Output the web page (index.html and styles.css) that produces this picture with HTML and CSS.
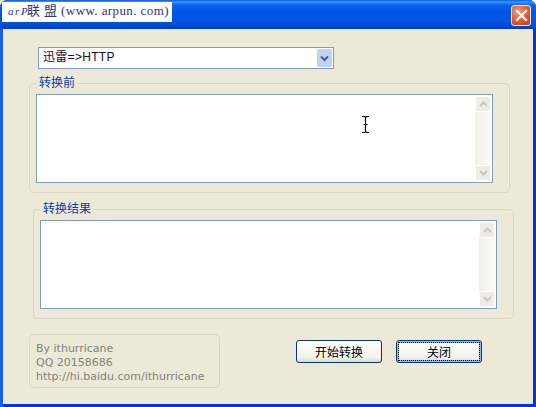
FILE: index.html
```html
<!DOCTYPE html>
<html>
    <head>
        <meta charset="utf-8" />
        <title>arP联盟</title>
        <link rel="stylesheet" href="styles.css">
    </head>
    <body>
        <div class="window">
            <div class="titlebar">
                <div class="logo"><i>a r P</i>联 盟 (www. arpun. com)</div>
                <div class="close-btn">
                    <svg width="13" height="13" viewBox="0 0 13 13"><path d="M2 2 L11 11 M11 2 L2 11" stroke="#fff" stroke-width="2.2" stroke-linecap="square" fill="none"/></svg>
                </div>
            </div>
            <div class="client">
                <div class="combo">
                    <span class="combo-text">迅雷=&gt;HTTP</span>
                    <span class="combo-arrow">
                        <svg width="9" height="7" viewBox="0 0 9 7"><path d="M1 1.5 L4.5 5 L8 1.5" stroke="#4d6185" stroke-width="2" fill="none"/></svg>
                    </span>
                </div>
                <fieldset class="group group-before">
                    <legend>转换前</legend>
                    <div class="textbox">
                        <div class="scrollbar">
                            <span class="sb-btn"><svg width="9" height="6" viewBox="0 0 9 6"><path d="M1 5 L4.5 1.5 L8 5" stroke="#c9c7ba" stroke-width="2" fill="none"/></svg></span>
                            <span class="sb-btn"><svg width="9" height="6" viewBox="0 0 9 6"><path d="M1 1 L4.5 4.5 L8 1" stroke="#c9c7ba" stroke-width="2" fill="none"/></svg></span>
                        </div>
                    </div>
                </fieldset>
                <fieldset class="group group-after">
                    <legend>转换结果</legend>
                    <div class="textbox">
                        <div class="scrollbar">
                            <span class="sb-btn"><svg width="9" height="6" viewBox="0 0 9 6"><path d="M1 5 L4.5 1.5 L8 5" stroke="#c9c7ba" stroke-width="2" fill="none"/></svg></span>
                            <span class="sb-btn"><svg width="9" height="6" viewBox="0 0 9 6"><path d="M1 1 L4.5 4.5 L8 1" stroke="#c9c7ba" stroke-width="2" fill="none"/></svg></span>
                        </div>
                    </div>
                </fieldset>
                <div class="footer">
                    <div class="credit">
                        <div>By ithurricane</div>
                        <div>QQ 20158686</div>
                        <div>http://hi.baidu.com/ithurricane</div>
                    </div>
                    <div class="actions">
                        <div class="btn">开始转换</div>
                        <div class="btn btn-default"><span>关闭</span></div>
                    </div>
                </div>
            </div>
            <svg class="ibeam" width="7" height="17" viewBox="0 0 7 17"><path d="M0 .5 H2.5 L3.5 1.5 L4.5 .5 H7 M3.5 1.5 V15.5 M0 16.5 H2.5 L3.5 15.5 L4.5 16.5 H7 M1.5 8.5 H5.5" stroke="#000" stroke-width="1.2" fill="none"/></svg>
        </div>
    </body>
</html>
```

FILE: styles.css
```css
*{
    box-sizing: border-box;
    padding: 0;
    margin: 0;
}
html, body{
    width: 536px;
    height: 407px;
    overflow: hidden;
    background: #fff;
}
body{
    font-family: "Liberation Sans", "Noto Sans CJK SC", sans-serif;
    font-size: 12px;
    color: #000;
}
.window{
    position: relative;
    width: 536px;
    height: 407px;
    display: flex;
    flex-direction: column;
    border-radius: 7px 7px 0 0;
    overflow: hidden;
    background: linear-gradient(to right, #1a60e8 3px, #0831d9 3px);
}
.titlebar{
    height: 29px;
    flex: none;
    display: flex;
    justify-content: space-between;
    align-items: flex-start;
    padding: 2px 5px 0 2px;
    background: linear-gradient(#0a5ce0 0, #3d95ff 2px, #0a63ee 5px, #0055e5 12px, #0054e3 22px, #0049d0 26px, #003bb8 29px);
}
.logo{
    width: 170px;
    height: 20px;
    background: #fff;
    color: #2a3488;
    font-family: "Liberation Serif", "Noto Sans CJK SC", serif;
    font-size: 13px;
    line-height: 17px;
    padding-left: 6px;
    letter-spacing: 0.4px;
    white-space: nowrap;
}
.logo i{
    font-size: 11px;
    letter-spacing: -0.6px;
}
.close-btn{
    width: 20px;
    height: 21px;
    margin-top: 3px;
    border: 1px solid #f4e6e0;
    border-radius: 3px;
    background: radial-gradient(circle at 35% 30%, #ef9a7c, #de5a33 55%, #c23a1a);
    display: flex;
    align-items: center;
    justify-content: center;
}
.client{
    flex: 1;
    margin: 0 3px 3px;
    background: #ece9d8;
    padding-top: 18px;
}
.combo{
    width: 296px;
    height: 22px;
    margin-left: 35px;
    background: #fff;
    border: 1px solid #7f9db9;
    display: flex;
    justify-content: space-between;
    align-items: center;
    padding: 1px 1px 1px 4px;
}
.combo-text{
    letter-spacing: 0.3px;
    line-height: 16px;
    margin-top: -2px;
    color: #1a0a30;
}
.combo-arrow{
    width: 15px;
    height: 18px;
    background: #c1d2f6;
    border-radius: 2px;
    display: flex;
    align-items: center;
    justify-content: center;
}
.group{
    width: 481px;
    border: 1px solid #d8d5c3;
    border-radius: 5px;
    min-width: 0;
}
.group legend{
    color: #0b3fa8;
    line-height: 14px;
    margin-left: 0;
    padding: 0 3px;
}
.group-before{
    margin: 7px 0 0 26px;
    padding: 4px 16px 9px 6px;
}
.group-after{
    margin: 9px 0 0 30px;
    padding: 4px 16px 9px 6px;
}
.textbox{
    height: 89px;
    background: #fff;
    border: 1px solid #7f9db9;
    display: flex;
    justify-content: flex-end;
    padding: 1px;
}
.scrollbar{
    width: 16px;
    background: linear-gradient(to right, #f1f0e8, #fbfbf8);
    display: flex;
    flex-direction: column;
    justify-content: space-between;
}
.sb-btn{
    height: 16px;
    background: #eeede5;
    border: 1px solid #fff;
    border-radius: 2px;
    display: flex;
    align-items: center;
    justify-content: center;
}
.footer{
    display: flex;
    margin: 15px 0 0 26px;
}
.credit{
    width: 191px;
    height: 54px;
    border: 1px solid #d8d5c3;
    border-radius: 5px;
    padding: 7px 0 0 6px;
    color: #85837a;
    font-family: "DejaVu Sans", sans-serif;
    font-size: 11px;
    line-height: 14px;
}
.actions{
    display: flex;
    gap: 14px;
    margin: 6px 0 0 76px;
}
.btn{
    width: 86px;
    height: 23px;
    border: 1px solid #003c74;
    border-radius: 3px;
    background: linear-gradient(#fff, #f3f2ea 80%, #dcd8c8);
    display: flex;
    align-items: center;
    justify-content: center;
}
.btn-default{
    padding: 1px;
    box-shadow: inset 0 0 0 2px #9db8e8;
}
.btn-default span{
    width: 100%;
    height: 100%;
    display: flex;
    align-items: center;
    justify-content: center;
    outline: 1px dotted #000;
    outline-offset: -1px;
}
.ibeam{
    position: absolute;
    left: 362px;
    top: 116px;
}
```
